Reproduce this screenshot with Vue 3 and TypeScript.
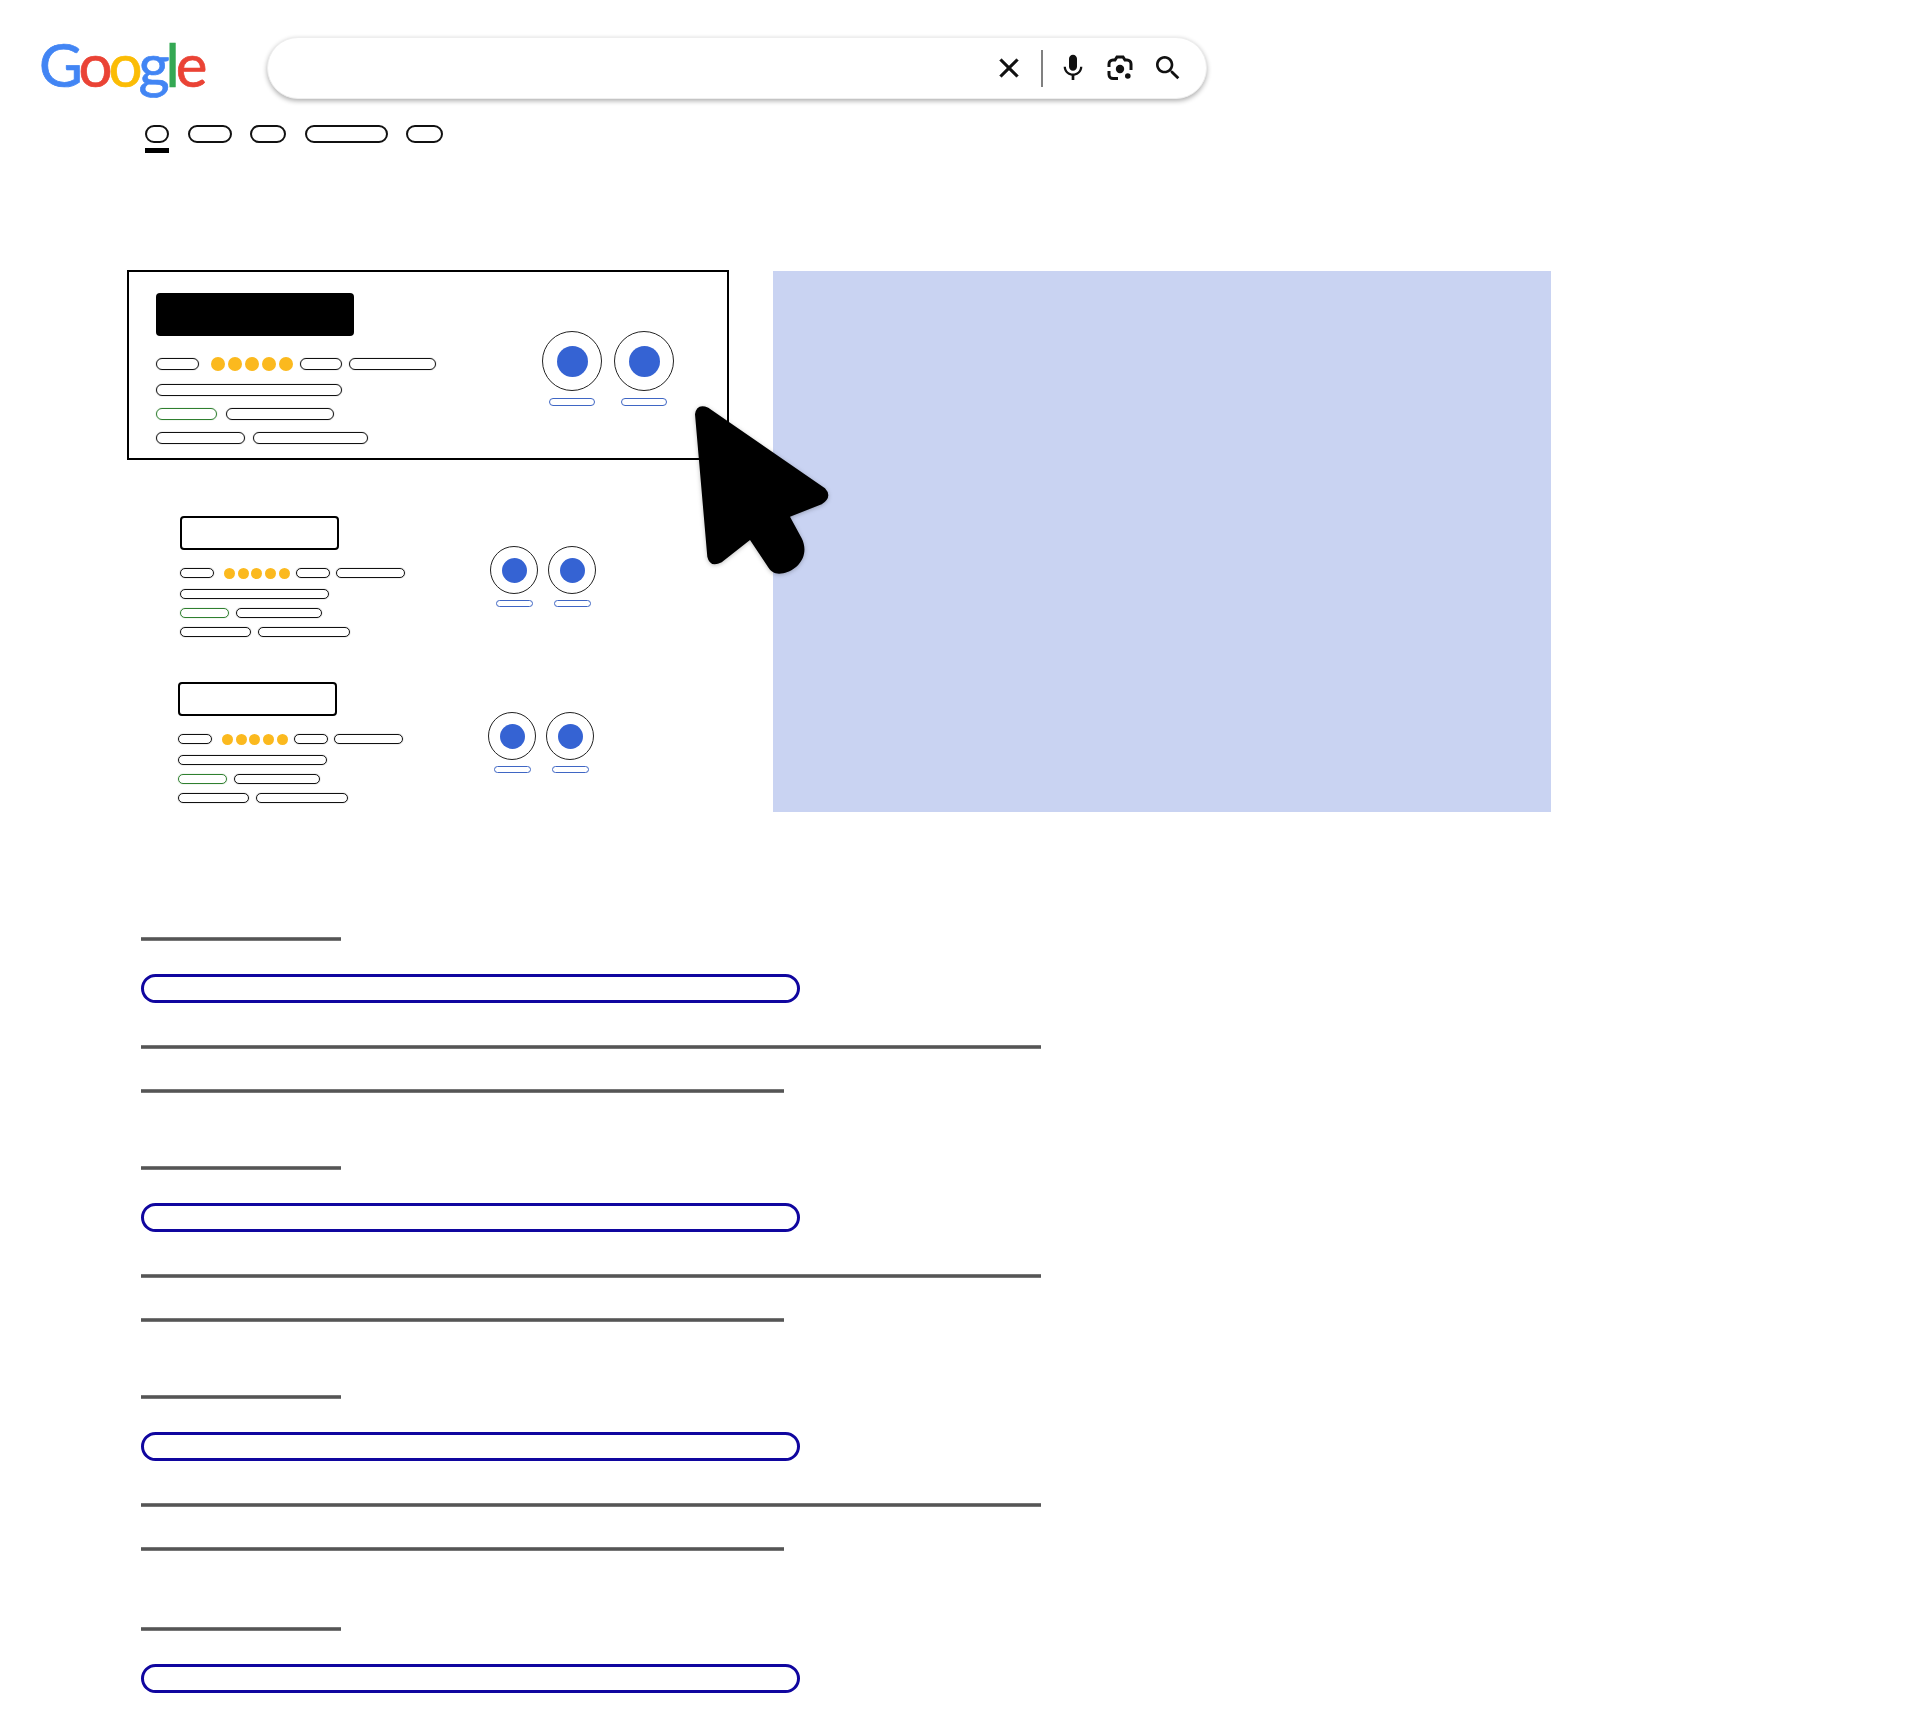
<script setup lang="ts">
type PillKind = "pill" | "green" | "stars";

interface PillItem {
  kind: PillKind;
  width?: number;
}

const logoLetters = [
  { char: "G", color: "#4285f4" },
  { char: "o", color: "#ea4335" },
  { char: "o", color: "#fbbc05" },
  { char: "g", color: "#4285f4" },
  { char: "l", color: "#34a853" },
  { char: "e", color: "#ea4335" },
];

const tabWidths = [24, 44, 36, 83, 37];

const bigRows: PillItem[][] = [
  [{ kind: "pill", width: 43 }, { kind: "stars" }, { kind: "pill", width: 42 }, { kind: "pill", width: 87 }],
  [{ kind: "pill", width: 186 }],
  [{ kind: "green", width: 61 }, { kind: "pill", width: 108 }],
  [{ kind: "pill", width: 89 }, { kind: "pill", width: 115 }],
];

const smallRows: PillItem[][] = [
  [{ kind: "pill", width: 34 }, { kind: "stars" }, { kind: "pill", width: 34 }, { kind: "pill", width: 69 }],
  [{ kind: "pill", width: 149 }],
  [{ kind: "green", width: 49 }, { kind: "pill", width: 86 }],
  [{ kind: "pill", width: 71 }, { kind: "pill", width: 92 }],
];

const places = [
  { id: "p1", variant: "place-big", rows: bigRows },
  { id: "p2", variant: "place-small place-second", rows: smallRows },
  { id: "p3", variant: "place-small place-third", rows: smallRows },
];

const results = [
  { id: "r1", lines: [900, 643] },
  { id: "r2", lines: [900, 643] },
  { id: "r3", lines: [900, 643] },
  { id: "r4", lines: [] as number[] },
];
</script>

<template>
  <div class="page">
    <header class="header">
      <div class="logo">
        <span v-for="(letter, i) in logoLetters" :key="i" :style="{ color: letter.color }">{{ letter.char }}</span>
      </div>
      <div class="search">
        <input class="search-input" type="text" aria-label="Search" />
        <div class="search-icons">
          <svg class="icon icon-close" viewBox="0 0 24 24">
            <path d="M19 6.41L17.59 5 12 10.59 6.41 5 5 6.41 10.59 12 5 17.59 6.41 19 12 13.41 17.59 19 19 17.59 13.41 12z" />
          </svg>
          <span class="divider"></span>
          <svg class="icon icon-mic" viewBox="0 0 24 24">
            <path d="M12 14c1.66 0 2.99-1.34 2.99-3L15 5c0-1.66-1.34-3-3-3S9 3.34 9 5v6c0 1.66 1.34 3 3 3zm5.3-3c0 3-2.54 5.1-5.3 5.1S6.7 14 6.7 11H5c0 3.41 2.72 6.23 6 6.72V21h2v-3.28c3.28-.48 6-3.3 6-6.72h-1.7z" />
          </svg>
          <svg class="icon" viewBox="0 0 32 32">
            <path class="lens-frame" d="M5 15v-3a4 4 0 0 1 4-4h2l2-3h6l2 3h2a4 4 0 0 1 4 4v6M5 19v3.5a4 4 0 0 0 4 4h5" />
            <circle cx="16" cy="17" r="4.2" />
            <circle cx="23.8" cy="24" r="2.8" />
          </svg>
          <svg class="icon" viewBox="0 0 24 24">
            <path d="M15.5 14h-.79l-.28-.27C15.41 12.59 16 11.11 16 9.5 16 5.91 13.09 3 9.5 3S3 5.91 3 9.5 5.91 16 9.5 16c1.61 0 3.09-.59 4.23-1.57l.27.28v.79l5 4.99L20.49 19l-4.99-5zm-6 0C7.01 14 5 11.99 5 9.5S7.01 5 9.5 5 14 7.01 14 9.5 11.99 14 9.5 14z" />
          </svg>
        </div>
      </div>
    </header>

    <nav class="tabs">
      <div v-for="(width, i) in tabWidths" :key="i" class="tab" :class="{ active: i === 0 }">
        <span class="tab-label" :style="{ width: width + 'px' }"></span>
      </div>
    </nav>

    <section class="local">
      <div class="places">
        <article v-for="place in places" :key="place.id" class="place" :class="place.variant">
          <div class="place-info">
            <div class="place-title"></div>
            <div v-for="(row, r) in place.rows" :key="r" class="row">
              <template v-for="(item, n) in row" :key="n">
                <div v-if="item.kind === 'stars'" class="stars">
                  <span v-for="s in 5" :key="s" class="star"></span>
                </div>
                <span v-else class="pill" :class="{ green: item.kind === 'green' }" :style="{ width: item.width + 'px' }"></span>
              </template>
            </div>
          </div>
          <div class="actions">
            <div v-for="a in 2" :key="a" class="action">
              <div class="ring"><span class="ring-dot"></span></div>
              <span class="ring-label"></span>
            </div>
          </div>
        </article>
      </div>
      <div class="map"></div>
      <svg class="cursor" viewBox="0 0 150 180">
        <path d="M5 14.3Q6.7 3 18.3 7.7L135 88.3Q143 96.7 131.7 104.3L100 116.7 111.7 138.3C120 155 108.3 170 93.3 173.3 86 174.5 81.7 173.3 76.7 165L60 140 31.7 162.3Q20 168.3 17.3 156.7Z" />
      </svg>
    </section>

    <section class="organic">
      <article v-for="result in results" :key="result.id" class="result">
        <div class="line line-head"></div>
        <div class="result-title"></div>
        <div v-for="(width, i) in result.lines" :key="i" class="line line-body" :style="{ width: width + 'px' }"></div>
      </article>
    </section>
  </div>
</template>

<style scoped>
.page {
  position: relative;
  box-sizing: border-box;
  width: 1920px;
  min-height: 1728px;
  padding-top: 37px;
  background: #ffffff;
  overflow: hidden;
}

.header {
  display: flex;
  align-items: center;
  padding-left: 39px;
}

.logo {
  width: 228px;
  margin-top: -8px;
  font-family: Lato, "Open Sans", sans-serif;
  font-size: 60px;
  font-weight: 400;
  line-height: 62px;
  letter-spacing: -4px;
  -webkit-text-stroke: 0.7px currentColor;
}

.search {
  box-sizing: border-box;
  display: flex;
  align-items: center;
  width: 940px;
  height: 62px;
  padding-right: 22px;
  border: 1px solid #eeeeee;
  border-radius: 31px;
  background: #ffffff;
  box-shadow: 0 2px 5px rgba(0, 0, 0, 0.32);
}

.search-input {
  flex: 1;
  min-width: 0;
  height: 100%;
  padding: 0 24px;
  border: none;
  outline: none;
  background: transparent;
}

.search-icons {
  display: flex;
  align-items: center;
  gap: 16px;
}

.icon {
  width: 32px;
  height: 32px;
  fill: #111111;
}

.icon-close {
  stroke: #111111;
  stroke-width: 0.4;
}

.icon-mic {
  margin-left: -2px;
  margin-right: -1px;
}

.lens-frame {
  fill: none;
  stroke: #111111;
  stroke-width: 3;
}

.divider {
  width: 2px;
  height: 37px;
  background: #808080;
}

.tabs {
  display: flex;
  gap: 18.5px;
  height: 28px;
  margin-top: 26px;
  padding-left: 145px;
}

.tab-label {
  box-sizing: border-box;
  display: block;
  height: 18px;
  border: 2px solid #111111;
  border-radius: 9px;
}

.tab.active::after {
  content: "";
  display: block;
  height: 5px;
  margin-top: 5px;
  background: #000000;
}

.local {
  position: relative;
  display: flex;
  gap: 44px;
  height: 542px;
  margin-top: 117px;
  padding-left: 127px;
}

.places {
  width: 602px;
}

.place {
  display: flex;
}

.place-big {
  box-sizing: border-box;
  height: 190px;
  padding: 21px 0 0 27px;
  border: 2px solid #000000;
}

.place-big .place-info {
  width: 386px;
}

.place-big .place-title {
  width: 198px;
  height: 43px;
  margin-bottom: 22px;
  border-radius: 4px;
  background: #000000;
}

.place-big .row {
  height: 12px;
  gap: 7px;
  margin-bottom: 12px;
}

.place-big .row:nth-child(2) {
  margin-bottom: 14px;
}

.place-big .row:nth-child(4) .pill:first-child {
  margin-right: 2px;
}

.place-big .row:nth-child(5) .pill:first-child {
  margin-right: 1px;
}

.place-big .stars {
  gap: 3px;
  margin-left: 5px;
}

.place-big .star {
  width: 14px;
  height: 14px;
}

.place-big .actions {
  gap: 12px;
  margin-top: 38px;
}

.place-big .action {
  gap: 7px;
}

.place-big .ring {
  width: 60px;
  height: 60px;
}

.place-big .ring-dot {
  width: 31px;
  height: 31px;
}

.place-big .ring-label {
  width: 46px;
  height: 8px;
}

.place-small .place-info {
  width: 310px;
}

.place-small .place-title {
  box-sizing: border-box;
  width: 159px;
  height: 34px;
  margin-bottom: 18px;
  border: 2px solid #000000;
  border-radius: 4px;
}

.place-small .row {
  height: 10px;
  gap: 6px;
  margin-bottom: 9px;
}

.place-small .row:nth-child(2) {
  margin-bottom: 11px;
}

.place-small .row:nth-child(4) .pill:first-child,
.place-small .row:nth-child(5) .pill:first-child {
  margin-right: 1px;
}

.place-small .stars {
  gap: 2.7px;
  margin-left: 4px;
}

.place-small .star {
  width: 11px;
  height: 11px;
}

.place-small .actions {
  gap: 10px;
  margin-top: 30px;
}

.place-small .action {
  gap: 6px;
}

.place-small .ring {
  width: 48px;
  height: 48px;
}

.place-small .ring-dot {
  width: 25px;
  height: 25px;
}

.place-small .ring-label {
  width: 37px;
  height: 7px;
}

.place-second {
  margin-top: 56px;
  margin-left: 53px;
}

.place-third {
  margin-top: 36px;
  margin-left: 51px;
}

.row {
  display: flex;
  align-items: center;
}

.pill {
  box-sizing: border-box;
  flex: none;
  display: block;
  height: 100%;
  border: 1px solid #111111;
  border-radius: 6px;
  box-shadow: 0 0 1px rgba(0, 0, 0, 0.6);
}

.pill.green {
  border-color: #2f7f2f;
  box-shadow: 0 0 1px rgba(40, 120, 40, 0.6);
}

.stars {
  display: flex;
}

.star {
  display: block;
  border-radius: 50%;
  background: #fbb91e;
}

.actions {
  display: flex;
  align-items: flex-start;
}

.action {
  display: flex;
  flex-direction: column;
  align-items: center;
}

.ring {
  box-sizing: border-box;
  display: flex;
  align-items: center;
  justify-content: center;
  border: 1px solid #222222;
  border-radius: 50%;
}

.ring-dot {
  display: block;
  border-radius: 50%;
  background: #3563d3;
}

.ring-label {
  box-sizing: border-box;
  display: block;
  border: 1px solid #3f66c4;
  border-radius: 4px;
}

.map {
  width: 778px;
  height: 541px;
  margin-top: 1px;
  background: #c9d3f2;
}

.cursor {
  position: absolute;
  top: 130px;
  left: 690px;
  width: 150px;
  height: 180px;
  fill: #000000;
  filter: drop-shadow(0 1px 2px rgba(0, 0, 0, 0.25));
}

.organic {
  margin-top: 125px;
  padding-left: 141px;
}

.result {
  margin-bottom: 73px;
}

.result:nth-child(3) {
  margin-bottom: 76px;
}

.line {
  height: 4px;
  background: linear-gradient(#9a9a9a, #555555 25%, #555555 75%, #9a9a9a);
}

.line-head {
  width: 200px;
  margin-bottom: 33px;
}

.result-title {
  box-sizing: border-box;
  width: 659px;
  height: 29px;
  margin-bottom: 42px;
  border: 3px solid #10069f;
  border-radius: 15px;
}

.line-body + .line-body {
  margin-top: 40px;
}
</style>

<style>
body {
  margin: 0;
  background: #ffffff;
}
</style>
